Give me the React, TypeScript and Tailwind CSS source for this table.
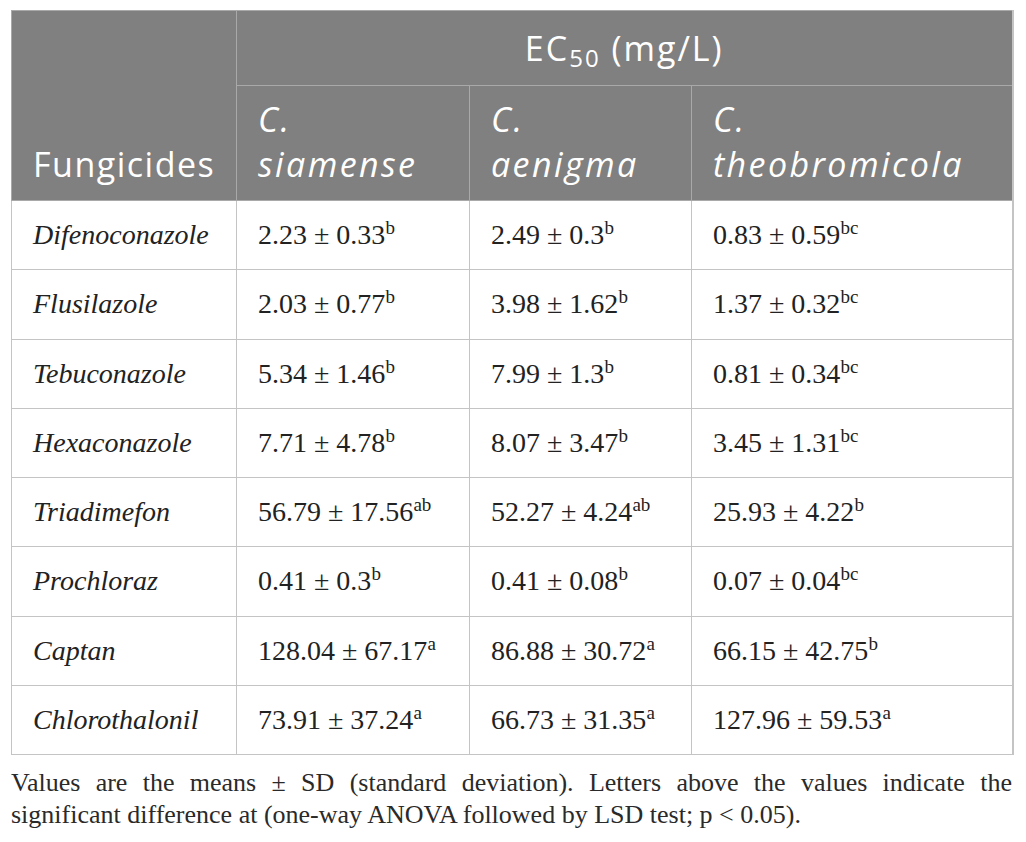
import React from "react";

type Row = { name: string; v: [string, string][] };

const rows: Row[] = [
  { name: "Difenoconazole", v: [["2.23 ± 0.33", "b"], ["2.49 ± 0.3", "b"], ["0.83 ± 0.59", "bc"]] },
  { name: "Flusilazole", v: [["2.03 ± 0.77", "b"], ["3.98 ± 1.62", "b"], ["1.37 ± 0.32", "bc"]] },
  { name: "Tebuconazole", v: [["5.34 ± 1.46", "b"], ["7.99 ± 1.3", "b"], ["0.81 ± 0.34", "bc"]] },
  { name: "Hexaconazole", v: [["7.71 ± 4.78", "b"], ["8.07 ± 3.47", "b"], ["3.45 ± 1.31", "bc"]] },
  { name: "Triadimefon", v: [["56.79 ± 17.56", "ab"], ["52.27 ± 4.24", "ab"], ["25.93 ± 4.22", "b"]] },
  { name: "Prochloraz", v: [["0.41 ± 0.3", "b"], ["0.41 ± 0.08", "b"], ["0.07 ± 0.04", "bc"]] },
  { name: "Captan", v: [["128.04 ± 67.17", "a"], ["86.88 ± 30.72", "a"], ["66.15 ± 42.75", "b"]] },
  { name: "Chlorothalonil", v: [["73.91 ± 37.24", "a"], ["66.73 ± 31.35", "a"], ["127.96 ± 59.53", "a"]] },
];

const sans = "font-['Open_Sans','Lato',sans-serif]";
const serif = "font-['Liberation_Serif','Times_New_Roman',serif]";

export default function App() {
  return (
    <div className="w-[1026px] h-[842px] bg-white pt-[10px] pl-[11px] pr-[14px]">
      <table className="border-collapse table-fixed w-[1001px]">
        <colgroup>
          <col className="w-[225px]" />
          <col className="w-[233px]" />
          <col className="w-[222px]" />
          <col className="w-[321px]" />
        </colgroup>
        <thead className={`${sans} text-white text-[34px]`}>
          <tr className="h-[75px] bg-[#808080]">
            <th
              rowSpan={2}
              className="border border-[#a9a9a9] align-bottom text-left font-normal pl-[21px] pb-[13px] leading-[45px] tracking-[1.5px]"
            >
              Fungicides
            </th>
            <th
              colSpan={3}
              className="border border-[#a9a9a9] border-r-[#c4c4c4] border-r-2 text-center font-normal leading-[45px] tracking-[2px]"
            >
              EC<sub className="text-[24px] top-[6px]">50</sub> (mg/L)
            </th>
          </tr>
          <tr className="h-[115px] bg-[#808080]">
            {["siamense", "aenigma", "theobromicola"].map((s, i) => (
              <th
                key={s}
                className={`border border-[#a9a9a9] align-bottom text-left font-normal italic pl-[21px] pb-[13px] leading-[45px] tracking-[2.4px] ${
                  i === 2 ? "border-r-2 border-r-[#c4c4c4]" : ""
                }`}
              >
                C.
                <br />
                {s}
              </th>
            ))}
          </tr>
        </thead>
        <tbody className={`${serif} text-[28px] text-[#222222]`}>
          {rows.map((r) => (
            <tr key={r.name} className="h-[69.25px]">
              <td className="border border-[#c4c4c4] pl-[21px] italic align-middle">{r.name}</td>
              {r.v.map(([val, sup], i) => (
                <td
                  key={i}
                  className={`border border-[#c4c4c4] pl-[21px] align-middle whitespace-nowrap ${
                    i === 2 ? "border-r-2" : ""
                  }`}
                >
                  {val}
                  <sup className="text-[19px] top-[-10px]">{sup}</sup>
                </td>
              ))}
            </tr>
          ))}
        </tbody>
      </table>
      <p className={`${serif} text-[26px] leading-[32px] text-[#2a2a2a] text-justify mt-[12px] w-[1001px]`}>
        Values are the means ± SD (standard deviation). Letters above the values indicate the significant
        difference at (one-way ANOVA followed by LSD test; p &lt; 0.05).
      </p>
    </div>
  );
}
